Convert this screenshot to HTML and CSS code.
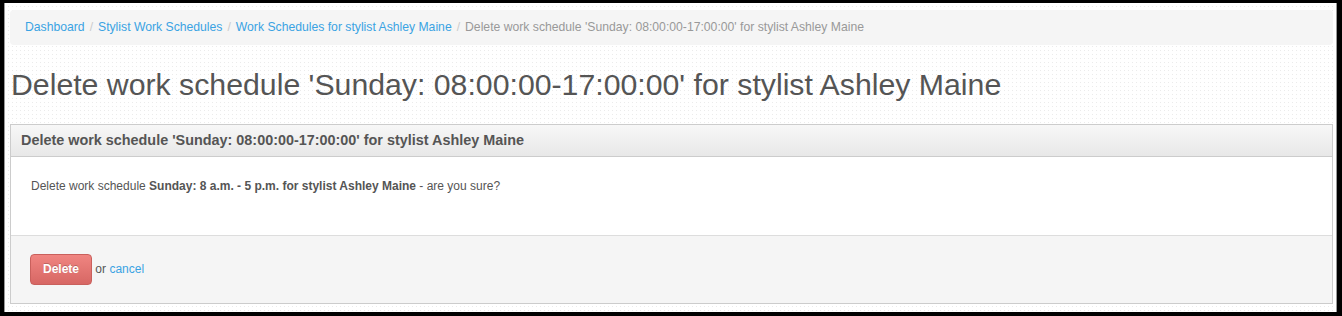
FILE: index.html
```html
<!DOCTYPE html>
<html lang="en">
<head>
  <meta charset="UTF-8" />
  <title>Delete work schedule</title>
  <link rel="stylesheet" href="styles.css">
</head>
<body>
  <div class="frame">
    <div class="page">
      <ul class="breadcrumb"><li><a href="#">Dashboard</a><span class="divider">/</span></li><li><a href="#">Stylist Work Schedules</a><span class="divider">/</span></li><li><a href="#">Work Schedules for stylist Ashley Maine</a><span class="divider">/</span></li><li class="active">Delete work schedule 'Sunday: 08:00:00-17:00:00' for stylist Ashley Maine</li></ul>

      <h1>Delete work schedule 'Sunday: 08:00:00-17:00:00' for stylist Ashley Maine</h1>

      <div class="panel">
        <div class="panel-heading">Delete work schedule 'Sunday: 08:00:00-17:00:00' for stylist Ashley Maine</div>
        <div class="panel-body">
          <p>Delete work schedule <strong>Sunday: 8 a.m. - 5 p.m. for stylist Ashley Maine</strong> - are you sure?</p>
        </div>
        <div class="panel-footer">
          <button class="btn-danger">Delete</button> or <a href="#">cancel</a>
        </div>
      </div>
    </div>
  </div>
</body>
</html>
```

FILE: styles.css
```css
html, body {
  margin: 0;
  padding: 0;
  background: #000;
}

body {
  font-family: 'Liberation Sans', Arial, Helvetica, sans-serif;
  font-size: 12px;
  line-height: 20px;
  color: #555;
}

a {
  color: #3aa3e3;
  text-decoration: none;
}

/* dotted page texture: one light dot per 4px tile */
.frame {
  margin: 3px 5px 4px 4px;
  height: 309px;
  box-sizing: border-box;
  border-left: 1px solid #999;
  border-right: 1px solid #999;
  background-color: #fff;
  background-image:
    linear-gradient(90deg, #fff 3px, transparent 3px),
    linear-gradient(#fff 3px, #ebebeb 3px);
  background-size: 4px 4px;
  overflow: hidden;
}

.page {
  padding: 7px 3px 0 5px;
}

.breadcrumb {
  list-style: none;
  margin: 0;
  padding: 7px 15px 8px;
  font-size: 12.2px;
  background: #f5f5f5;
  border-radius: 4px;
}

.breadcrumb li {
  display: inline;
}

.breadcrumb .divider {
  color: #ccc;
  padding: 0 5px;
}

.breadcrumb .active {
  color: #999;
}

h1 {
  margin: 20px 0 19px 1px;
  font-size: 30.25px;
  font-weight: normal;
  line-height: 40px;
  color: #555;
}

.panel {
  border: 1px solid #ccc;
  background: #fff;
}

.panel-heading {
  padding: 5px 10px 6px;
  font-size: 14.4px;
  font-weight: bold;
  background: linear-gradient(to bottom, #f7f7f7, #e8e8e8);
  border-bottom: 1px solid #ccc;
}

.panel-body {
  padding: 19px 20px;
}

.panel-body p {
  margin: 0 0 20px;
}

.panel-footer {
  padding: 18px 19px;
  background: #f5f5f5;
  border-top: 1px solid #ddd;
}

.btn-danger {
  font-family: inherit;
  font-size: 12px;
  font-weight: bold;
  line-height: 17px;
  padding: 6px 12px;
  color: #fff;
  text-shadow: 0 -1px 0 rgba(0, 0, 0, 0.2);
  background: linear-gradient(to bottom, #f08581, #d76764);
  border: 1px solid #c9605c;
  border-radius: 4px;
  cursor: pointer;
}
```
